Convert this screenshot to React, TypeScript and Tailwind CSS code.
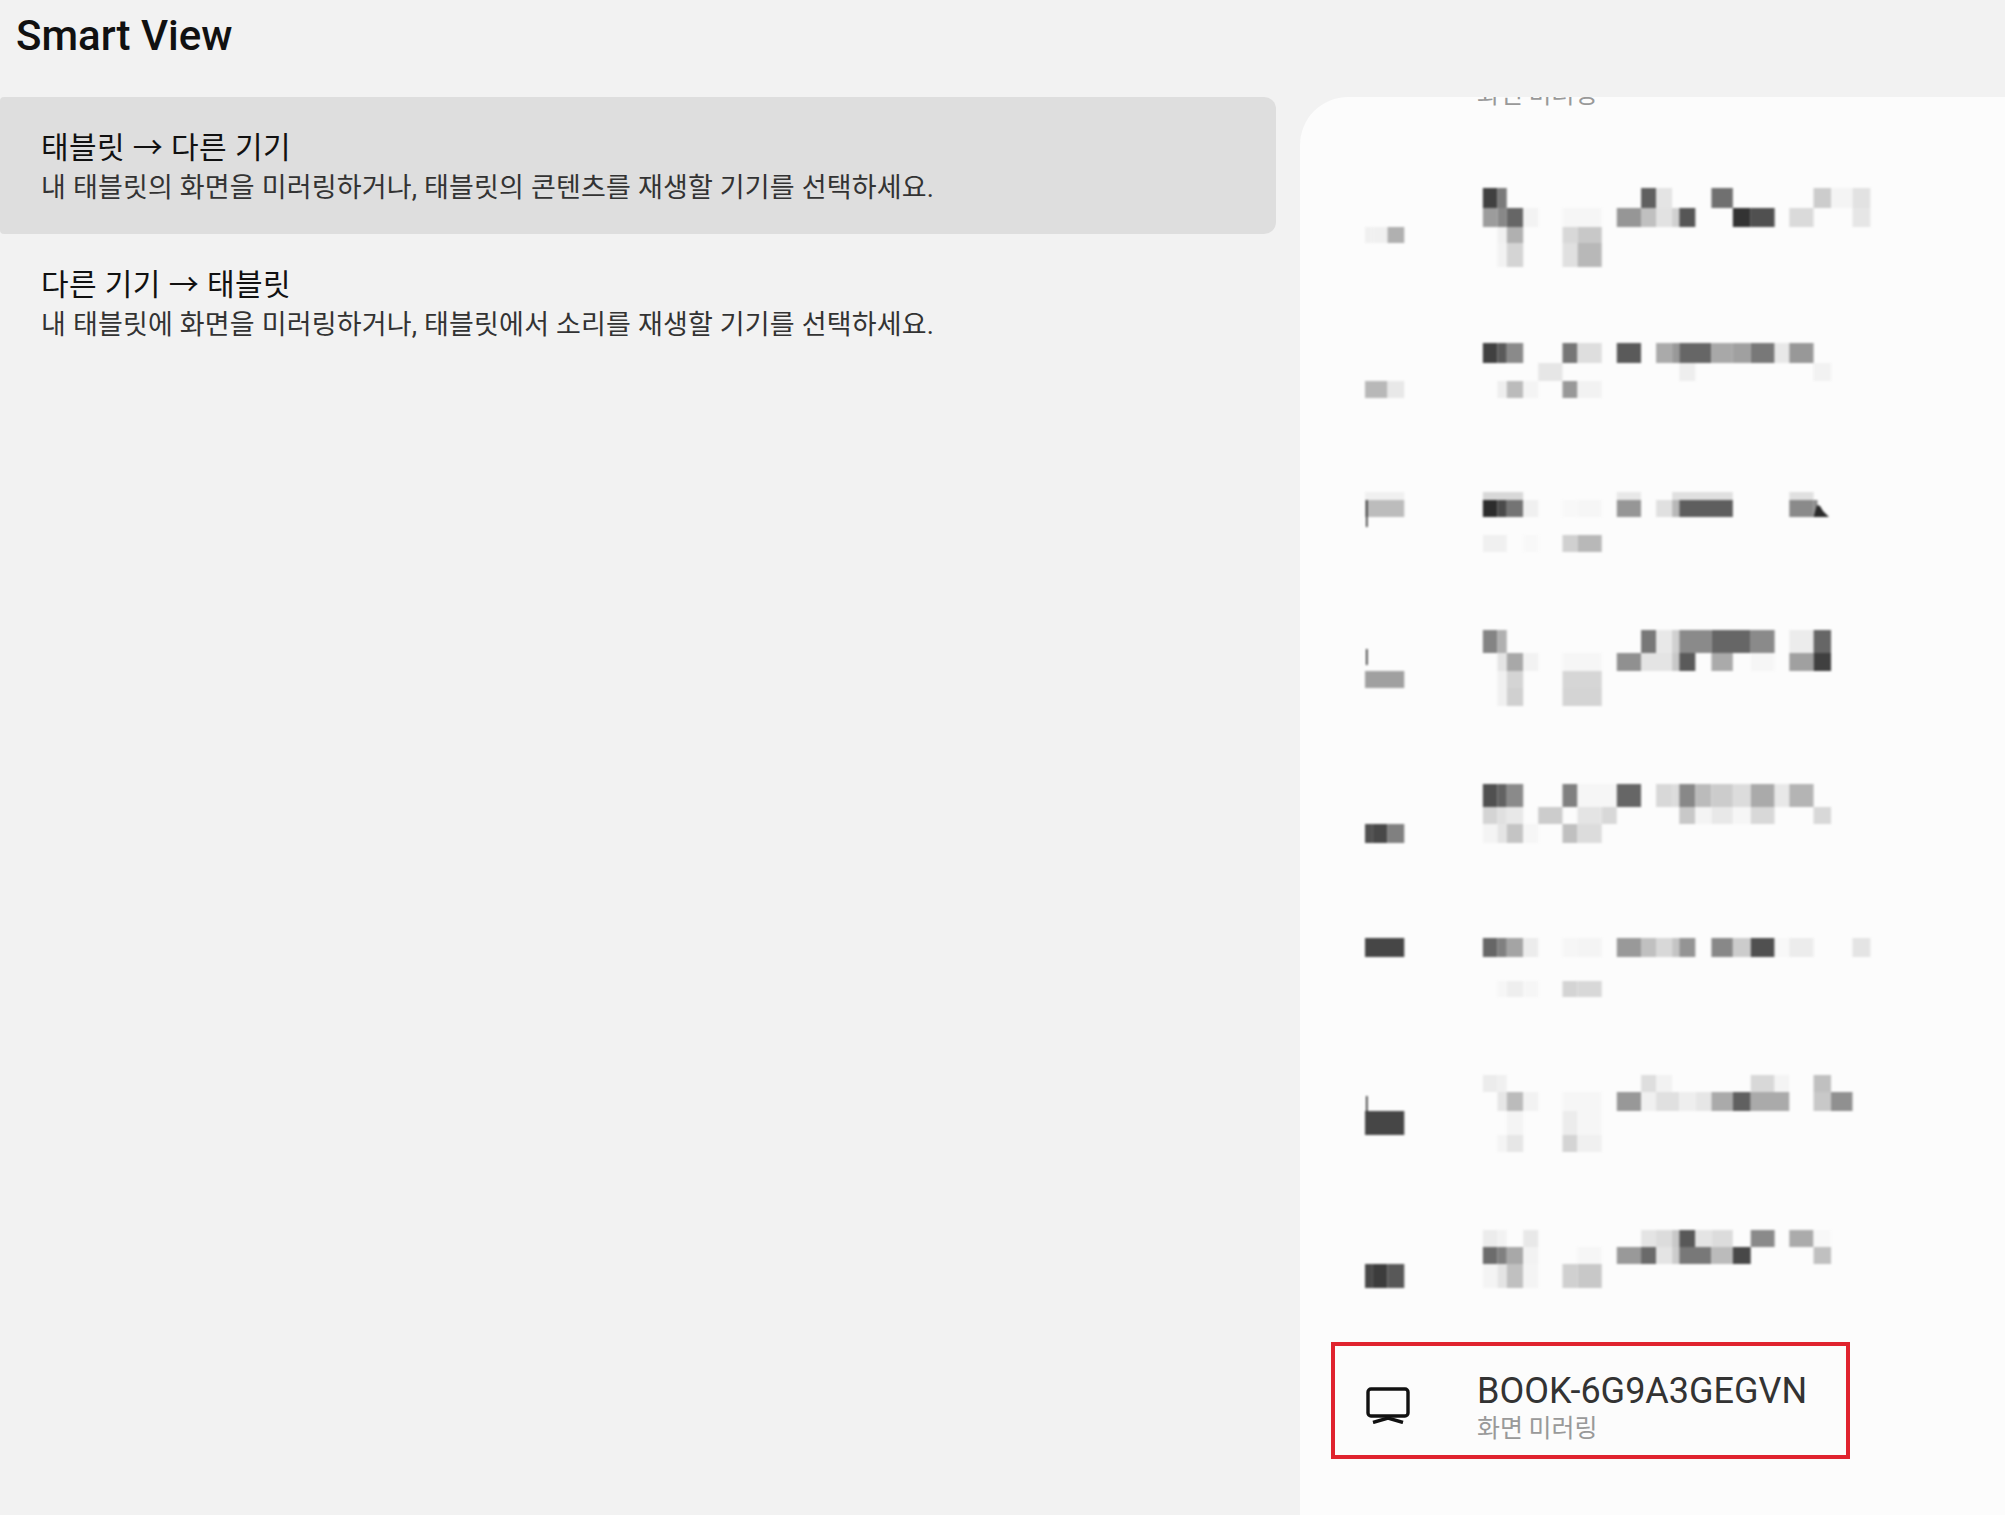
const cols: Record<string, number> = {
  a: 400, b: 441, c: 467, d: 513, e: 555, f: 623, g: 665, h: 733, i: 775, j: 843, k: 885, l: 930,
  m: 950, n: 995, o: 1040, p: 1100, q: 1150, r: 1217, s: 1258, t: 1326, u: 1375, v: 1435, w: 1485,
  A: 70, B: 92, C: 133, D: 180,
};
const X = (c: string) => 1340 + cols[c] / 2.8;

// [top, bottom, "from to gray ..."]
type Band = [number, number, string];
type Row = { top: number; h: number; bands: Band[]; marks?: [number, number][]; extra?: boolean };

const rows: Row[] = [
  {
    top: 107, h: 193,
    bands: [
      [188, 208, "ab404040 bc7a7a7a jk606060 kle4e4e4 op707070 tucccccc uvf4f4f4 vwe2e2e2"],
      [208, 227, "ab9c9c9c bc888888 cd666666 def3f3f3 fhf6f6f6 ij969696 jkc0c0c0 kle2e2e2 lmd0d0d0 mn565656 pq333333 qr505050 stdadada vwe6e6e6"],
      [227, 243, "bcf0f0f0 cdb0b0b0 fgd8d8d8 ghc8c8c8 ABf0f0f0 BCf0f0f0 CDb0b0b0"],
      [243, 267, "bcf2f2f2 cdd4d4d4 fge0e0e0 ghb8b8b8"],
    ],
  },
  {
    top: 300, h: 150,
    bands: [
      [343, 363, "ab404040 bc5a5a5a cd8a8a8a fg767676 ghdedede ij5a5a5a klaaaaaa lm999999 mo666666 opa8a8a8 pqa0a0a0 qr787878 rse8e8e8 st989898"],
      [363, 381, "efe6e6e6 mneeeeee tuf2f2f2"],
      [381, 398, "bceeeeee cdbbbbbb def4f4f4 fg989898 ghf2f2f2 ACb8b8b8 CDe8e8e8"],
    ],
  },
  {
    top: 450, h: 140, marks: [[500, 527]], extra: true,
    bands: [
      [492, 500, "add8d8d8 ije8e8e8 lpe0e0e0 ste0e0e0 ADf0f0f0"],
      [500, 517, "ab2c2c2c bc4a4a4a cd747474 def0f0f0 fgf8f8f8 ghf6f6f6 ij969696 kle0e0e0 lmb8b8b8 mp5e5e5e st8a8a8a ADbcbcbc"],
      [535, 552, "acf0f0f0 def8f8f8 fgd0d0d0 ghb8b8b8"],
    ],
  },
  {
    top: 590, h: 155, marks: [[649, 665]],
    bands: [
      [630, 653, "ab848484 bcb0b0b0 jk787878 kle8e8e8 lmd0d0d0 mo8a8a8a oq666666 qr8a8a8a stececec tu666666"],
      [653, 671, "bce4e4e4 cda8a8a8 def2f2f2 fhf6f6f6 ij909090 jle4e4e4 lmc8c8c8 mn5a5a5a opaaaaaa qrf6f6f6 sta0a0a0 tu404040"],
      [671, 688, "bcf0f0f0 cdd4d4d4 fhd6d6d6 ADa0a0a0"],
      [688, 706, "bcf0f0f0 cdd0d0d0 fhd4d4d4"],
    ],
  },
  {
    top: 745, h: 145,
    bands: [
      [784, 807, "ab505050 bc626262 cd8a8a8a fg808080 gif6f6f6 ij666666 kld8d8d8 lmdcdcdc mn888888 nobbbbbb opcccccc pqdcdcdc qraaaaaa rse8e8e8 stb4b4b4"],
      [807, 824, "abd4d4d4 bce0e0e0 cde8e8e8 efcccccc ghe4e4e4 hid8d8d8 mnc8c8c8 nof4f4f4 ope8e8e8 pqf6f6f6 qrd8d8d8 tud8d8d8"],
      [824, 843, "abf4f4f4 bce4e4e4 cdc4c4c4 def6f6f6 fgc0c0c0 ghdcdcdc AB505050 BC484848 CD808080"],
    ],
  },
  {
    top: 890, h: 140,
    bands: [
      [938, 957, "ab666666 bc808080 cda4a4a4 deececec fgf6f6f6 ghf4f4f4 ij999999 jkc0c0c0 kld8d8d8 lmc4c4c4 mn949494 op888888 pqcccccc qr505050 rsf8f8f8 stececec vwe4e4e4 AD464646"],
      [981, 997, "bcf6f6f6 cdeeeeee def6f6f6 fgd4d4d4 ghd8d8d8"],
    ],
  },
  {
    top: 1030, h: 160, marks: [[1096, 1112]],
    bands: [
      [1075, 1092, "abececec bcf0f0f0 jkdedede klf2f2f2 qrd8d8d8 rsf4f4f4 tuc0c0c0"],
      [1092, 1111, "bce6e6e6 cdbbbbbb def2f2f2 fhf6f6f6 ij989898 jkf0f0f0 kme0e0e0 mneeeeee noe6e6e6 opaaaaaa pq606060 qsaaaaaa tuc8c8c8 uv909090"],
      [1111, 1135, "cdf4f4f4 fgececec ghf6f6f6 AD464646"],
      [1135, 1152, "bcf4f4f4 cde6e6e6 fgd4d4d4 ghf0f0f0"],
    ],
  },
  {
    top: 1190, h: 152,
    bands: [
      [1230, 1247, "abececec bcf2f2f2 dee8e8e8 jke4e4e4 kldcdcdc lmc8c8c8 mn585858 noe4e4e4 opdcdcdc qr8a8a8a stababab tuf8f8f8"],
      [1247, 1264, "ab6c6c6c bc808080 cda8a8a8 def2f2f2 ghf6f6f6 ij999999 jk6a6a6a kle4e4e4 lmcccccc mo787878 opbbbbbb pq484848 tuc0c0c0"],
      [1264, 1288, "abf4f4f4 bce4e4e4 cdc0c0c0 def4f4f4 fgd0d0d0 ghc8c8c8 AB484848 BC3c3c3c CD585858"],
    ],
  },
];

function MosaicRow({ row }: { row: Row }) {
  return (
    <svg
      className="block shrink-0 blur-[0.8px]"
      width={705}
      height={row.h}
      viewBox={`1300 ${row.top} 705 ${row.h}`}
    >
      {row.bands.map(([y0, y1, spec], bi) =>
        spec.split(" ").map((s, si) => {
          const x0 = X(s[0]);
          const x1 = X(s[1]);
          return <rect key={`${bi}-${si}`} x={x0} y={y0} width={x1 - x0} height={y1 - y0} fill={`#${s.slice(2)}`} />;
        })
      )}
      {row.marks?.map(([a, b], i) => (
        <rect key={i} x={1366} y={a} width={1.5} height={b - a} fill="#222222" />
      ))}
      {row.extra && (
        <>
          <rect x={1813.5} y={500} width={4} height={17} fill="#8a8a8a" />
          <path d="M1813.5 517 L1817 505 L1820 506 L1823 511 L1829 517 Z" fill="#2a2a2a" />
        </>
      )}
    </svg>
  );
}

const ko = "font-['Noto_Sans_CJK_KR',sans-serif]";

function Item({ active, title, sub }: { active?: boolean; title: string; sub: string }) {
  return (
    <div
      className={`h-[137px] rounded-r-[12px] rounded-l-[4px] px-[41px] pt-[6px] flex flex-col justify-center ${active ? "bg-[#dedede]" : ""}`}
    >
      <div className="text-[30px] leading-[40px] tracking-[0.4px] text-[#111111] font-['Roboto','Noto_Sans_CJK_KR',sans-serif]">{title}</div>
      <div className="text-[27px] leading-[41px] tracking-[0.17px] text-[#333333] font-['Roboto','Noto_Sans_CJK_KR',sans-serif]">{sub}</div>
    </div>
  );
}

export default function App() {
  return (
    <div className="w-[2005px] h-[1515px] bg-[#f2f2f2] overflow-hidden flex flex-col">
      <div className="h-[97px] shrink-0 px-[16px] pt-[12px]">
        <h1 className="text-[42px] leading-[48px] font-medium text-[#111111] font-['Roboto',sans-serif]">Smart View</h1>
      </div>
      <div className="flex-1 min-h-0 flex">
        <div className="w-[1276px] shrink-0">
          <Item
            active
            title="태블릿 → 다른 기기"
            sub="내 태블릿의 화면을 미러링하거나, 태블릿의 콘텐츠를 재생할 기기를 선택하세요."
          />
          <Item
            title="다른 기기 → 태블릿"
            sub="내 태블릿에 화면을 미러링하거나, 태블릿에서 소리를 재생할 기기를 선택하세요."
          />
        </div>
        <div className="ml-[24px] w-[705px] shrink-0 h-full bg-[#fcfcfc] rounded-tl-[48px] overflow-hidden flex flex-col justify-end pb-[56px]">
          <div className={`shrink-0 pl-[177px] text-[25px] leading-[30px] text-[#999999] ${ko}`}>화면 미러링</div>
          {rows.map((r) => (
            <MosaicRow key={r.top} row={r} />
          ))}
          <div className="shrink-0 ml-[31px] w-[519px] h-[117px] border-[4px] border-[#e0232e] flex items-center">
            <svg className="ml-[31px] mt-[10px] shrink-0" width={44} height={37} viewBox="0 0 44 37" fill="none" stroke="#111111">
              <rect x={2} y={2} width={40} height={27} rx={3} strokeWidth={3.4} />
              <path d="M22 29 L22 31 M7 35.5 L22 31 L37 35.5" strokeWidth={3.4} />
            </svg>
            <div className="ml-[67px] mt-[10px] flex flex-col">
              <div className="text-[36px] leading-[40px] text-[#333333] font-['Roboto',sans-serif]">BOOK-6G9A3GEGVN</div>
              <div className={`text-[25px] leading-[30px] text-[#999999] ${ko}`}>화면 미러링</div>
            </div>
          </div>
        </div>
      </div>
    </div>
  );
}
